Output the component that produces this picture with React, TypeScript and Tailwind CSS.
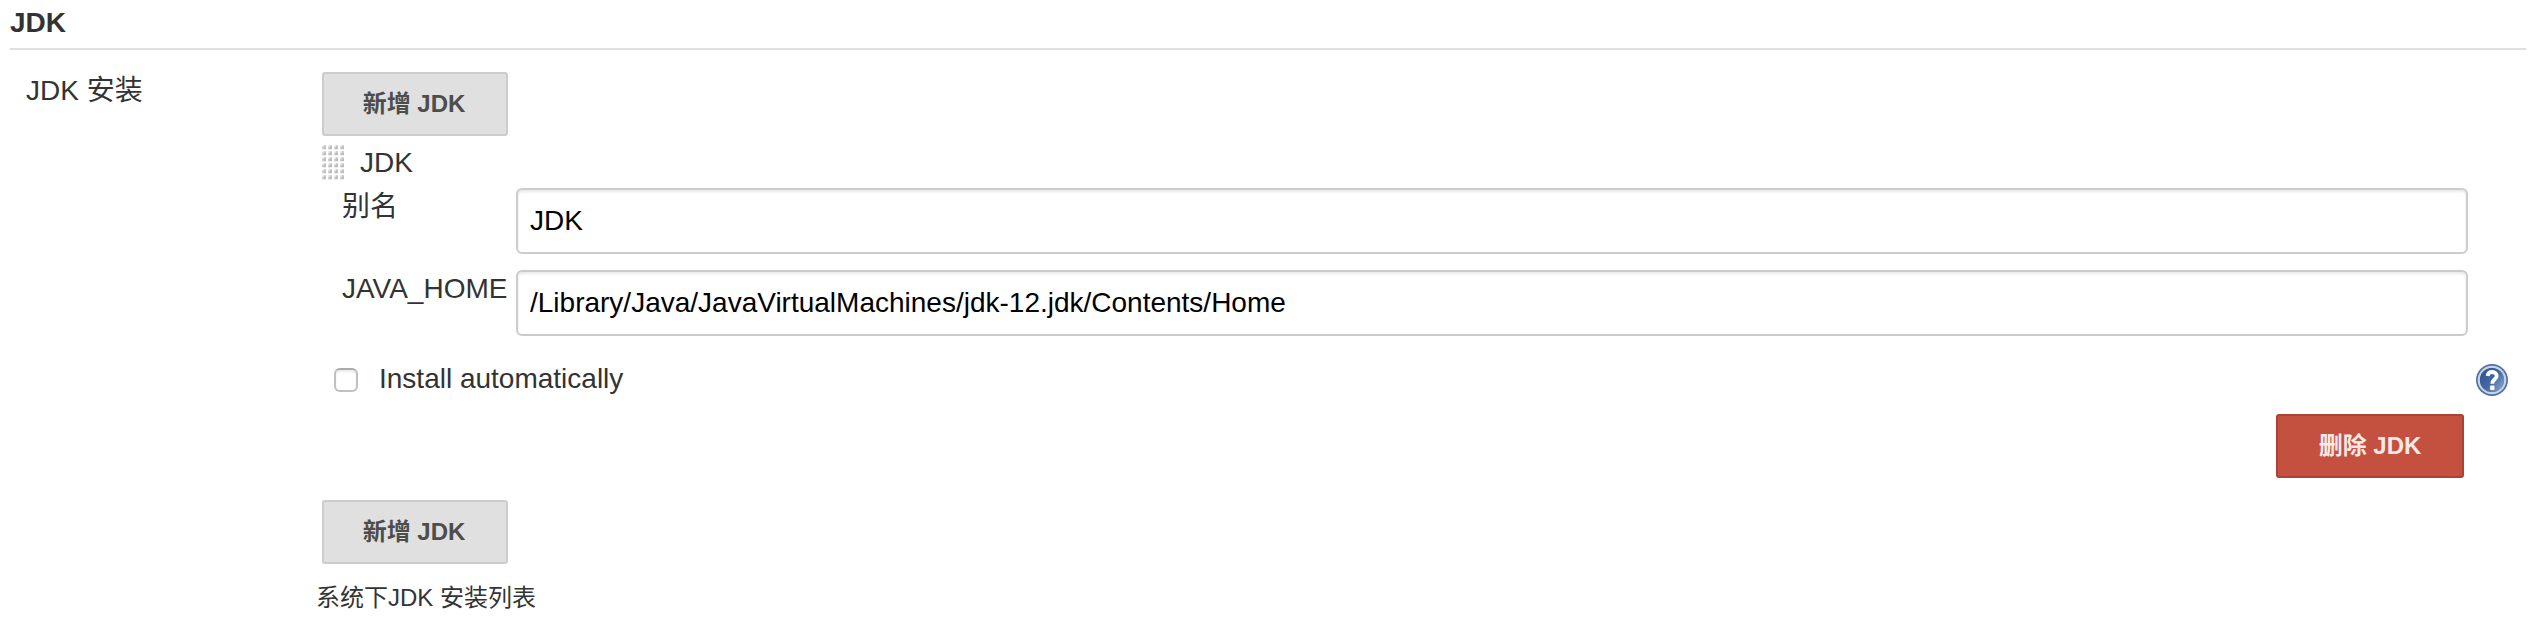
import React, { useState } from "react";

const GRIP_ROWS = [0, 6, 12, 18, 24, 30];
const GRIP_COLS = [0, 6, 12, 18];

function DragHandle() {
  return (
    <svg width="22" height="38" viewBox="0 0 22 38" className="block cursor-move" aria-hidden="true">
      {GRIP_ROWS.map((y) =>
        GRIP_COLS.map((x) => (
          <g key={`${x}-${y}`}>
            <rect x={x} y={y + 1} width="4" height="5" fill="#ededed" />
            <rect x={x} y={y + 3} width="4" height="2" fill="#d2d2d2" />
            <rect x={x + 2} y={y + 1} width="2" height="2" fill="#d2d2d2" />
            <rect x={x + 1.5} y={y + 2.5} width="2.5" height="2.5" fill="#bcbcbc" />
          </g>
        )),
      )}
    </svg>
  );
}

function HelpIcon() {
  return (
    <svg width="32" height="32" viewBox="0 0 32 32" className="block" role="img" aria-label="Help">
      <defs>
        <linearGradient id="helpFill" x1="0" y1="0.1" x2="1" y2="0.9">
          <stop offset="0" stopColor="#2f5290" />
          <stop offset="0.5" stopColor="#4467a3" />
          <stop offset="1" stopColor="#8ba6ce" />
        </linearGradient>
      </defs>
      <circle cx="16" cy="16" r="16" fill="#53719f" />
      <circle cx="16" cy="16" r="13.2" fill="none" stroke="#c6d3e6" strokeWidth="2.2" />
      <circle cx="16" cy="16" r="12.1" fill="url(#helpFill)" />
      <path
        d="M11.6 12C11.9 9.2 13.6 8 16.2 8C19 8 20.7 9.6 20.7 11.9C20.7 15.2 16.3 15.4 16.3 19.8"
        fill="none"
        stroke="#fff"
        strokeWidth="3.8"
      />
      <rect x="14.1" y="21.6" width="4.4" height="4.4" rx="1" fill="#fff" />
    </svg>
  );
}

function AddButton() {
  return (
    <button
      type="button"
      className="flex h-16 w-[186px] items-center justify-center rounded-[3px] border-2 border-[#cccccc] bg-[#e0e0e0] pr-0.5 text-2xl leading-7 font-bold whitespace-nowrap text-[#4d4d4d]"
    >
      新增 JDK
    </button>
  );
}

function Field({ label, value, onChange }: { label: string; value: string; onChange: (value: string) => void }) {
  return (
    <label className="flex h-[66px] items-start">
      <span className="w-[174px] shrink-0 pt-[3px] leading-8 whitespace-nowrap">{label}</span>
      <input
        type="text"
        value={value}
        onChange={(event) => onChange(event.target.value)}
        className="h-[66px] min-w-0 flex-1 rounded-md border-2 border-[#cccccc] bg-white px-3 text-[28px] leading-8 text-black shadow-[inset_0_2px_3px_rgba(0,0,0,0.09)] outline-none"
      />
    </label>
  );
}

export default function App() {
  const [name, setName] = useState("JDK");
  const [home, setHome] = useState("/Library/Java/JavaVirtualMachines/jdk-12.jdk/Contents/Home");
  const [auto, setAuto] = useState(false);

  return (
    <main className="h-[632px] w-full overflow-hidden bg-white font-['Liberation_Sans','Noto_Sans_CJK_SC',sans-serif] text-[28px] leading-8 text-[#333333]">
      <h2 className="mx-2.5 h-[50px] border-b-2 border-[#dfdfdf] pt-[7px] font-bold">JDK</h2>

      <section className="flex">
        <div className="w-[316px] shrink-0 pt-[25px] pl-[26px]">JDK 安装</div>

        <div className="min-w-0 flex-1 pt-[22px]">
          <div className="pl-1.5">
            <AddButton />

            <div className="mt-2 flex h-11 items-start gap-4">
              <DragHandle />
              <span className="pt-[3px]">JDK</span>
            </div>

            <div className="flex flex-col gap-4 pr-[68px] pl-5">
              <Field label="别名" value={name} onChange={setName} />
              <Field label="JAVA_HOME" value={home} onChange={setHome} />
            </div>

            <div className="mt-7 flex h-8 items-center justify-between pr-7 pl-3">
              <label className="flex items-center gap-[21px]">
                <input
                  type="checkbox"
                  checked={auto}
                  onChange={(event) => setAuto(event.target.checked)}
                  className="size-6 appearance-none rounded-md border-2 border-[#c0c0c0] border-t-[#ababab] bg-white shadow-[inset_0_2px_2px_rgba(0,0,0,0.08)]"
                />
                <span className="pb-0.5 leading-[30px]">Install automatically</span>
              </label>
              <HelpIcon />
            </div>

            <div className="mt-[18px] flex justify-end pr-[72px]">
              <button
                type="button"
                className="flex h-16 w-[188px] items-center justify-center rounded-[3px] border-2 border-[#ac4235] bg-[#c4513f] text-2xl leading-7 font-bold whitespace-nowrap text-[#f9e9e7]"
              >
                删除 JDK
              </button>
            </div>

            <div className="mt-[22px]">
              <AddButton />
            </div>
          </div>

          <p className="mt-5 text-2xl leading-7">系统下JDK 安装列表</p>
        </div>
      </section>
    </main>
  );
}
